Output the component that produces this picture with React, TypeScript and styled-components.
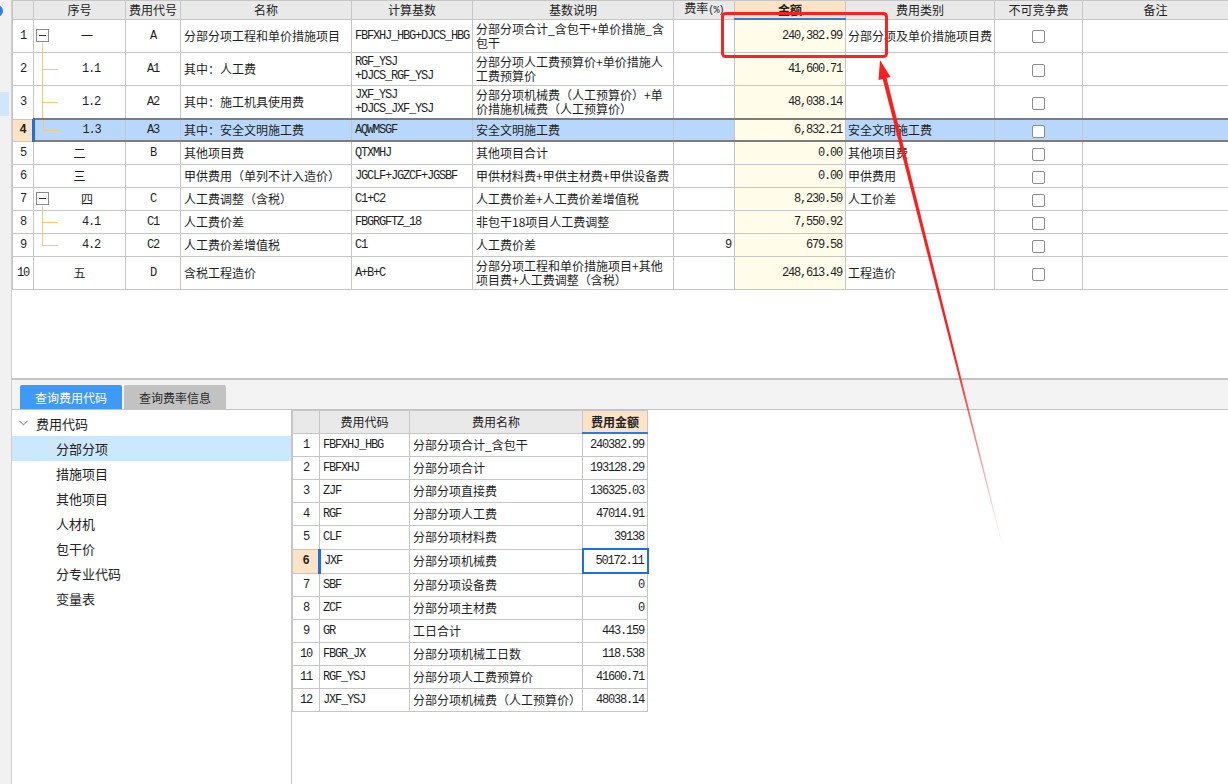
import React from "react"
import styled, { createGlobalStyle, css } from "styled-components"

const GlobalStyle = createGlobalStyle`
  html, body {
    margin: 0;
    padding: 0;
    background: #ffffff;
  }
  body {
    font-family: "Noto Sans CJK SC", "Noto Sans", sans-serif;
    font-size: 12px;
    color: #1f1f1f;
  }
`

const mono = css`
  font-family: "Liberation Mono", "DejaVu Sans Mono", monospace;
  font-size: 12px;
  letter-spacing: -1.2px;
`

const LINE = "#c6c6c6"

const Page = styled.div`
  position: relative;
  display: flex;
  width: 1228px;
  height: 784px;
  overflow: hidden;
`

const Strip = styled.div`
  width: 11px;
  flex: none;
  background: #f1f1f1;
  border-right: 1px solid #cfcfcf;
  display: flex;
  flex-direction: column;
`

const StripDot = styled.span`
  width: 12px;
  height: 12px;
  margin: 5px 0 0 -9px;
  border-radius: 50%;
  background: #2f80e4;
`

const StripMark = styled.span`
  width: 9px;
  height: 24px;
  margin-top: 75px;
  background: #cfe6fb;
`

const Main = styled.div`
  flex: 1;
  min-width: 0;
  display: flex;
  flex-direction: column;
`

const TopPane = styled.div`
  height: 378px;
  flex: none;
  background: #fff;
  border-bottom: 2px solid #c3c3c3;
  overflow: hidden;
`

const Grid = styled.table<{ $w: number }>`
  border-collapse: collapse;
  table-layout: fixed;
  width: ${(p) => p.$w}px;
`

const HeadCell = styled.th<{ $active?: boolean; $h: number }>`
  height: ${(p) => p.$h}px;
  padding: 0;
  font-weight: ${(p) => (p.$active ? 700 : 400)};
  background: ${(p) => (p.$active ? "#fde3c5" : "#e9e9e9")};
  border: 1px solid ${LINE};
  border-bottom: ${(p) => (p.$active ? "2px solid #2b7be3" : `1px solid ${LINE}`)};
  text-align: center;
  color: #222;
  font-size: 12px;
  line-height: 14px;
  white-space: nowrap;
  overflow: hidden;
`

const Small = styled.span`
  ${mono};
  font-size: 10px;
  letter-spacing: -0.8px;
`

type Tone = "plain" | "amount" | "sel" | "num"

const toneBg: Record<Tone, string> = {
  plain: "#ffffff",
  amount: "#fffde9",
  sel: "#b7d7fc",
  num: "#fde3c5",
}

const Cell = styled.td<{
  $h: number
  $align?: "left" | "center" | "right"
  $mono?: boolean
  $tone?: Tone
  $sel?: boolean
  $bar?: boolean
  $focus?: boolean
  $pl?: number
  $nowrap?: boolean
}>`
  position: relative;
  height: ${(p) => p.$h}px;
  padding: 0 3px 0 ${(p) => p.$pl ?? 3}px;
  border: 1px solid ${LINE};
  background: ${(p) => toneBg[p.$tone ?? "plain"]};
  text-align: ${(p) => p.$align ?? "left"};
  vertical-align: middle;
  line-height: 14px;
  overflow: hidden;
  color: #1f1f1f;
  white-space: ${(p) => (p.$nowrap ? "nowrap" : "normal")};
  ${(p) => p.$mono && mono};
  ${(p) => p.$tone === "num" && "font-weight: 700;"}
  ${(p) =>
    p.$sel &&
    css`
      border-top: 2px solid #7d7d7d;
      border-bottom: 2px solid #7d7d7d;
    `}
  ${(p) => p.$bar && "border-left: 3px solid #1c6fe6;"}
  ${(p) => p.$focus && "border: 2px solid #1c6fe6;"}
`

const Connector = styled.span<{ $kind: TreeKind }>`
  position: absolute;
  left: 8px;
  top: 0;
  bottom: 0;
  width: 18px;
  &::before {
    content: "";
    position: absolute;
    left: 0;
    width: 1px;
    background: #f9c67a;
    top: ${(p) => (p.$kind === "box" ? "calc(50% + 7px)" : "-1px")};
    bottom: ${(p) => (p.$kind === "last" ? "50%" : "-1px")};
  }
  &::after {
    content: "";
    display: ${(p) => (p.$kind === "box" ? "none" : "block")};
    position: absolute;
    left: 0;
    top: 50%;
    width: 16px;
    height: 1px;
    background: #f9c67a;
  }
`

const Toggle = styled.span`
  position: absolute;
  left: 2px;
  top: 50%;
  margin-top: -7px;
  width: 13px;
  height: 13px;
  box-sizing: border-box;
  border: 1px solid #8a8a8a;
  background: #fff;
  &::after {
    content: "";
    position: absolute;
    left: 2px;
    right: 2px;
    top: 5px;
    height: 1px;
    background: #333;
  }
`

const Check = styled.span`
  display: inline-block;
  width: 13px;
  height: 13px;
  box-sizing: border-box;
  border: 1px solid #8e8e8e;
  border-radius: 2px;
  background: #fff;
  vertical-align: middle;
`

const TabBar = styled.div`
  height: 29px;
  flex: none;
  background: #f3f3f3;
  display: flex;
  align-items: flex-end;
  gap: 2px;
  padding-left: 8px;
`

const Tab = styled.div<{ $active?: boolean }>`
  width: 102px;
  height: 24px;
  display: flex;
  align-items: center;
  justify-content: center;
  background: ${(p) => (p.$active ? "#3f99f6" : "#c2c2c2")};
  color: ${(p) => (p.$active ? "#ffffff" : "#2a2a2a")};
  border-radius: 2px 2px 0 0;
  font-size: 12px;
`

const BottomPane = styled.div`
  flex: 1;
  display: flex;
  min-height: 0;
  border-top: 1px solid #c4c4c4;
  background: #fff;
`

const TreePanel = styled.div`
  width: 279px;
  flex: none;
  border-right: 1px solid ${LINE};
  display: flex;
  flex-direction: column;
`

const TreeHead = styled.div`
  height: 26px;
  display: flex;
  align-items: center;
  gap: 8px;
  padding-left: 7px;
  font-size: 13px;
  color: #222;
`

const TreeItem = styled.div<{ $active?: boolean }>`
  height: 25px;
  display: flex;
  align-items: center;
  padding-left: 44px;
  font-size: 13px;
  color: #222;
  background: ${(p) => (p.$active ? "#cce8ff" : "transparent")};
`

const RightPanel = styled.div`
  flex: 1;
  min-width: 0;
`

const Overlay = styled.svg`
  position: absolute;
  left: 0;
  top: 0;
  pointer-events: none;
`

type TreeKind = "box" | "mid" | "last"

type FeeRow = {
  seq: string
  seqMono?: boolean
  tree?: TreeKind
  code: string
  name: string
  base: string[]
  desc: string
  rate?: string
  amount: string
  cat: string
  tall?: boolean
  sel?: boolean
}

const feeRows: FeeRow[] = [
  { seq: "一", tree: "box", code: "A", name: "分部分项工程和单价措施项目", base: ["FBFXHJ_HBG+DJCS_HBG"], desc: "分部分项合计_含包干+单价措施_含包干", amount: "240,382.99", cat: "分部分项及单价措施项目费", tall: true },
  { seq: "1.1", seqMono: true, tree: "mid", code: "A1", name: "其中：人工费", base: ["RGF_YSJ", "+DJCS_RGF_YSJ"], desc: "分部分项人工费预算价+单价措施人工费预算价", amount: "41,600.71", cat: "", tall: true },
  { seq: "1.2", seqMono: true, tree: "mid", code: "A2", name: "其中：施工机具使用费", base: ["JXF_YSJ", "+DJCS_JXF_YSJ"], desc: "分部分项机械费（人工预算价）+单价措施机械费（人工预算价）", amount: "48,038.14", cat: "", tall: true },
  { seq: "1.3", seqMono: true, tree: "last", code: "A3", name: "其中：安全文明施工费", base: ["AQWMSGF"], desc: "安全文明施工费", amount: "6,832.21", cat: "安全文明施工费", sel: true },
  { seq: "二", code: "B", name: "其他项目费", base: ["QTXMHJ"], desc: "其他项目合计", amount: "0.00", cat: "其他项目费" },
  { seq: "三", code: "", name: "甲供费用（单列不计入造价）", base: ["JGCLF+JGZCF+JGSBF"], desc: "甲供材料费+甲供主材费+甲供设备费", amount: "0.00", cat: "甲供费用" },
  { seq: "四", tree: "box", code: "C", name: "人工费调整（含税）", base: ["C1+C2"], desc: "人工费价差+人工费价差增值税", amount: "8,230.50", cat: "人工价差" },
  { seq: "4.1", seqMono: true, tree: "mid", code: "C1", name: "人工费价差", base: ["FBGRGFTZ_18"], desc: "非包干18项目人工费调整", amount: "7,550.92", cat: "" },
  { seq: "4.2", seqMono: true, tree: "last", code: "C2", name: "人工费价差增值税", base: ["C1"], desc: "人工费价差", rate: "9", amount: "679.58", cat: "" },
  { seq: "五", code: "D", name: "含税工程造价", base: ["A+B+C"], desc: "分部分项工程和单价措施项目+其他项目费+人工费调整（含税）", amount: "248,613.49", cat: "工程造价", tall: true },
]

const topCols = [21, 92, 55, 171, 121, 201, 61, 111, 149, 88, 146]

const codeRows = [
  ["FBFXHJ_HBG", "分部分项合计_含包干", "240382.99"],
  ["FBFXHJ", "分部分项合计", "193128.29"],
  ["ZJF", "分部分项直接费", "136325.03"],
  ["RGF", "分部分项人工费", "47014.91"],
  ["CLF", "分部分项材料费", "39138"],
  ["JXF", "分部分项机械费", "50172.11"],
  ["SBF", "分部分项设备费", "0"],
  ["ZCF", "分部分项主材费", "0"],
  ["GR", "工日合计", "443.159"],
  ["FBGR_JX", "分部分项机械工日数", "118.538"],
  ["RGF_YSJ", "分部分项人工费预算价", "41600.71"],
  ["JXF_YSJ", "分部分项机械费（人工预算价）", "48038.14"],
]

const bottomCols = [27, 90, 173, 65]

const treeItems = ["分部分项", "措施项目", "其他项目", "人材机", "包干价", "分专业代码", "变量表"]

const seqPad = (t?: TreeKind) => (t === "box" ? 18 : t ? 26 : 3)

export default function App() {
  return (
    <Page>
      <GlobalStyle />
      <Strip>
        <StripDot />
        <StripMark />
      </Strip>
      <Main>
        <TopPane>
          <Grid $w={1216}>
            <colgroup>
              {topCols.map((w, i) => (
                <col key={i} style={{ width: w }} />
              ))}
            </colgroup>
            <thead>
              <tr>
                <HeadCell $h={17} />
                <HeadCell $h={17}>序号</HeadCell>
                <HeadCell $h={17}>费用代号</HeadCell>
                <HeadCell $h={17}>名称</HeadCell>
                <HeadCell $h={17}>计算基数</HeadCell>
                <HeadCell $h={17}>基数说明</HeadCell>
                <HeadCell $h={17}>
                  费率<Small>(%)</Small>
                </HeadCell>
                <HeadCell $h={17} $active>
                  金额
                </HeadCell>
                <HeadCell $h={17}>费用类别</HeadCell>
                <HeadCell $h={17}>不可竞争费</HeadCell>
                <HeadCell $h={17}>备注</HeadCell>
              </tr>
            </thead>
            <tbody>
              {feeRows.map((r, i) => {
                const h = r.sel ? 20 : r.tall ? 32 : 22
                const body: Tone = r.sel ? "sel" : "plain"
                return (
                  <tr key={i}>
                    <Cell $h={h} $mono $align="center" $tone={r.sel ? "num" : "plain"}>
                      {i + 1}
                    </Cell>
                    <Cell $h={h} $align="center" $mono={r.seqMono} $tone={body} $sel={r.sel} $bar={r.sel} $pl={seqPad(r.tree)}>
                      {r.tree && <Connector $kind={r.tree} />}
                      {r.tree === "box" && <Toggle />}
                      {r.seq}
                    </Cell>
                    <Cell $h={h} $align="center" $mono $tone={body} $sel={r.sel}>
                      {r.code}
                    </Cell>
                    <Cell $h={h} $tone={body} $sel={r.sel}>
                      {r.name}
                    </Cell>
                    <Cell $h={h} $mono $tone={body} $sel={r.sel}>
                      {r.base.map((b, j) => (
                        <div key={j}>{b}</div>
                      ))}
                    </Cell>
                    <Cell $h={h} $tone={body} $sel={r.sel}>
                      {r.desc}
                    </Cell>
                    <Cell $h={h} $mono $align="right" $tone={body} $sel={r.sel}>
                      {r.rate}
                    </Cell>
                    <Cell $h={h} $mono $align="right" $tone="amount" $sel={r.sel}>
                      {r.amount}
                    </Cell>
                    <Cell $h={h} $tone={body} $sel={r.sel} $pl={2} $nowrap>
                      {r.cat}
                    </Cell>
                    <Cell $h={h} $align="center" $tone={body} $sel={r.sel}>
                      <Check />
                    </Cell>
                    <Cell $h={h} $tone={body} $sel={r.sel} />
                  </tr>
                )
              })}
            </tbody>
          </Grid>
        </TopPane>
        <TabBar>
          <Tab $active>查询费用代码</Tab>
          <Tab>查询费率信息</Tab>
        </TabBar>
        <BottomPane>
          <TreePanel>
            <TreeHead>
              <svg width="9" height="6" viewBox="0 0 9 6">
                <path d="M0.5 0.8 L4.5 4.8 L8.5 0.8" fill="none" stroke="#9a9a9a" strokeWidth="1.1" />
              </svg>
              费用代码
            </TreeHead>
            {treeItems.map((t, i) => (
              <TreeItem key={t} $active={i === 0}>
                {t}
              </TreeItem>
            ))}
          </TreePanel>
          <RightPanel>
            <Grid $w={355}>
              <colgroup>
                {bottomCols.map((w, i) => (
                  <col key={i} style={{ width: w }} />
                ))}
              </colgroup>
              <thead>
                <tr>
                  <HeadCell $h={21} />
                  <HeadCell $h={21}>费用代码</HeadCell>
                  <HeadCell $h={21}>费用名称</HeadCell>
                  <HeadCell $h={21} $active>
                    费用金额
                  </HeadCell>
                </tr>
              </thead>
              <tbody>
                {codeRows.map((r, i) => {
                  const sel = i === 5
                  return (
                    <tr key={r[0]}>
                      <Cell $h={22} $mono $align="center" $tone={sel ? "num" : "plain"}>
                        {i + 1}
                      </Cell>
                      <Cell $h={22} $mono $bar={sel}>
                        {r[0]}
                      </Cell>
                      <Cell $h={22}>{r[1]}</Cell>
                      <Cell $h={22} $mono $align="right" $focus={sel}>
                        {r[2]}
                      </Cell>
                    </tr>
                  )
                })}
              </tbody>
            </Grid>
          </RightPanel>
        </BottomPane>
      </Main>
      <Overlay width="1228" height="784" viewBox="0 0 1228 784">
        <defs>
          <linearGradient id="fade" gradientUnits="userSpaceOnUse" x1="880" y1="60" x2="1003" y2="548">
            <stop offset="0" stopColor="#ff1e1e" stopOpacity="1" />
            <stop offset="0.6" stopColor="#ff1e1e" stopOpacity="1" />
            <stop offset="1" stopColor="#ff1e1e" stopOpacity="0" />
          </linearGradient>
        </defs>
        <rect x="722.5" y="13.5" width="164" height="43" rx="3" fill="none" stroke="#ff2020" strokeWidth="3" />
        <polygon points="880,60 890.5,77 878.5,80" fill="#ff1e1e" />
        <polygon points="886.5,77.5 882.5,78.5 1002.6,548 1003.4,548" fill="url(#fade)" />
      </Overlay>
    </Page>
  )
}
